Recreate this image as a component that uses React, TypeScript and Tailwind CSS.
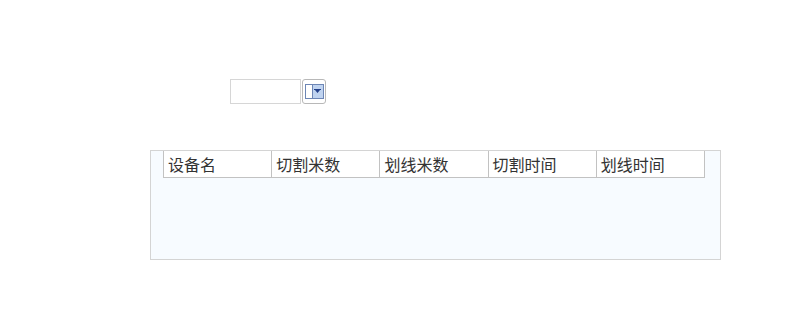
export default function App() {
  const cols = ["设备名", "切割米数", "划线米数", "切割时间", "划线时间"]

  return (
    <div className="w-[805px] h-[328px] bg-white font-['Noto_Sans_CJK_SC',sans-serif]">
      {/* date picker */}
      <div className="pt-[79px] pl-[230px] flex items-start">
        <div className="w-[71px] h-[25px] border border-[#d6d6d6] bg-white" />
        <button className="ml-[1px] w-[24px] h-[25px] border border-[#b8b8b8] rounded-[3px] bg-white flex items-center justify-center">
          <span className="flex w-[19px] h-[15px] border border-[#6d86b5] bg-white">
            <span className="w-[7px] border-r border-[#6d86b5]" />
            <span className="flex-1 bg-[#bfd3f0] flex items-center justify-center">
              <svg width="7" height="5" viewBox="0 0 7 5">
                <path d="M0 0h7v1H0zM1 1h5L3.5 4z" fill="#23408a" />
              </svg>
            </span>
          </span>
        </button>
      </div>

      {/* grid */}
      <div className="mt-[46px] ml-[150px] w-[571px] h-[110px] border border-[#d4d4d4] bg-[#f7fbff] pl-[12px]">
        <div className="flex w-[542px] h-[27px] border border-[#c2c2c2] border-t-0 bg-white">
          {cols.map((c, i) => (
            <div
              key={c}
              className={
                "flex-1 flex items-center pl-[4px] text-[16px] text-[#333] leading-none " +
                (i > 0 ? "border-l border-[#c2c2c2]" : "")
              }
            >
              {c}
            </div>
          ))}
        </div>
      </div>
    </div>
  )
}
